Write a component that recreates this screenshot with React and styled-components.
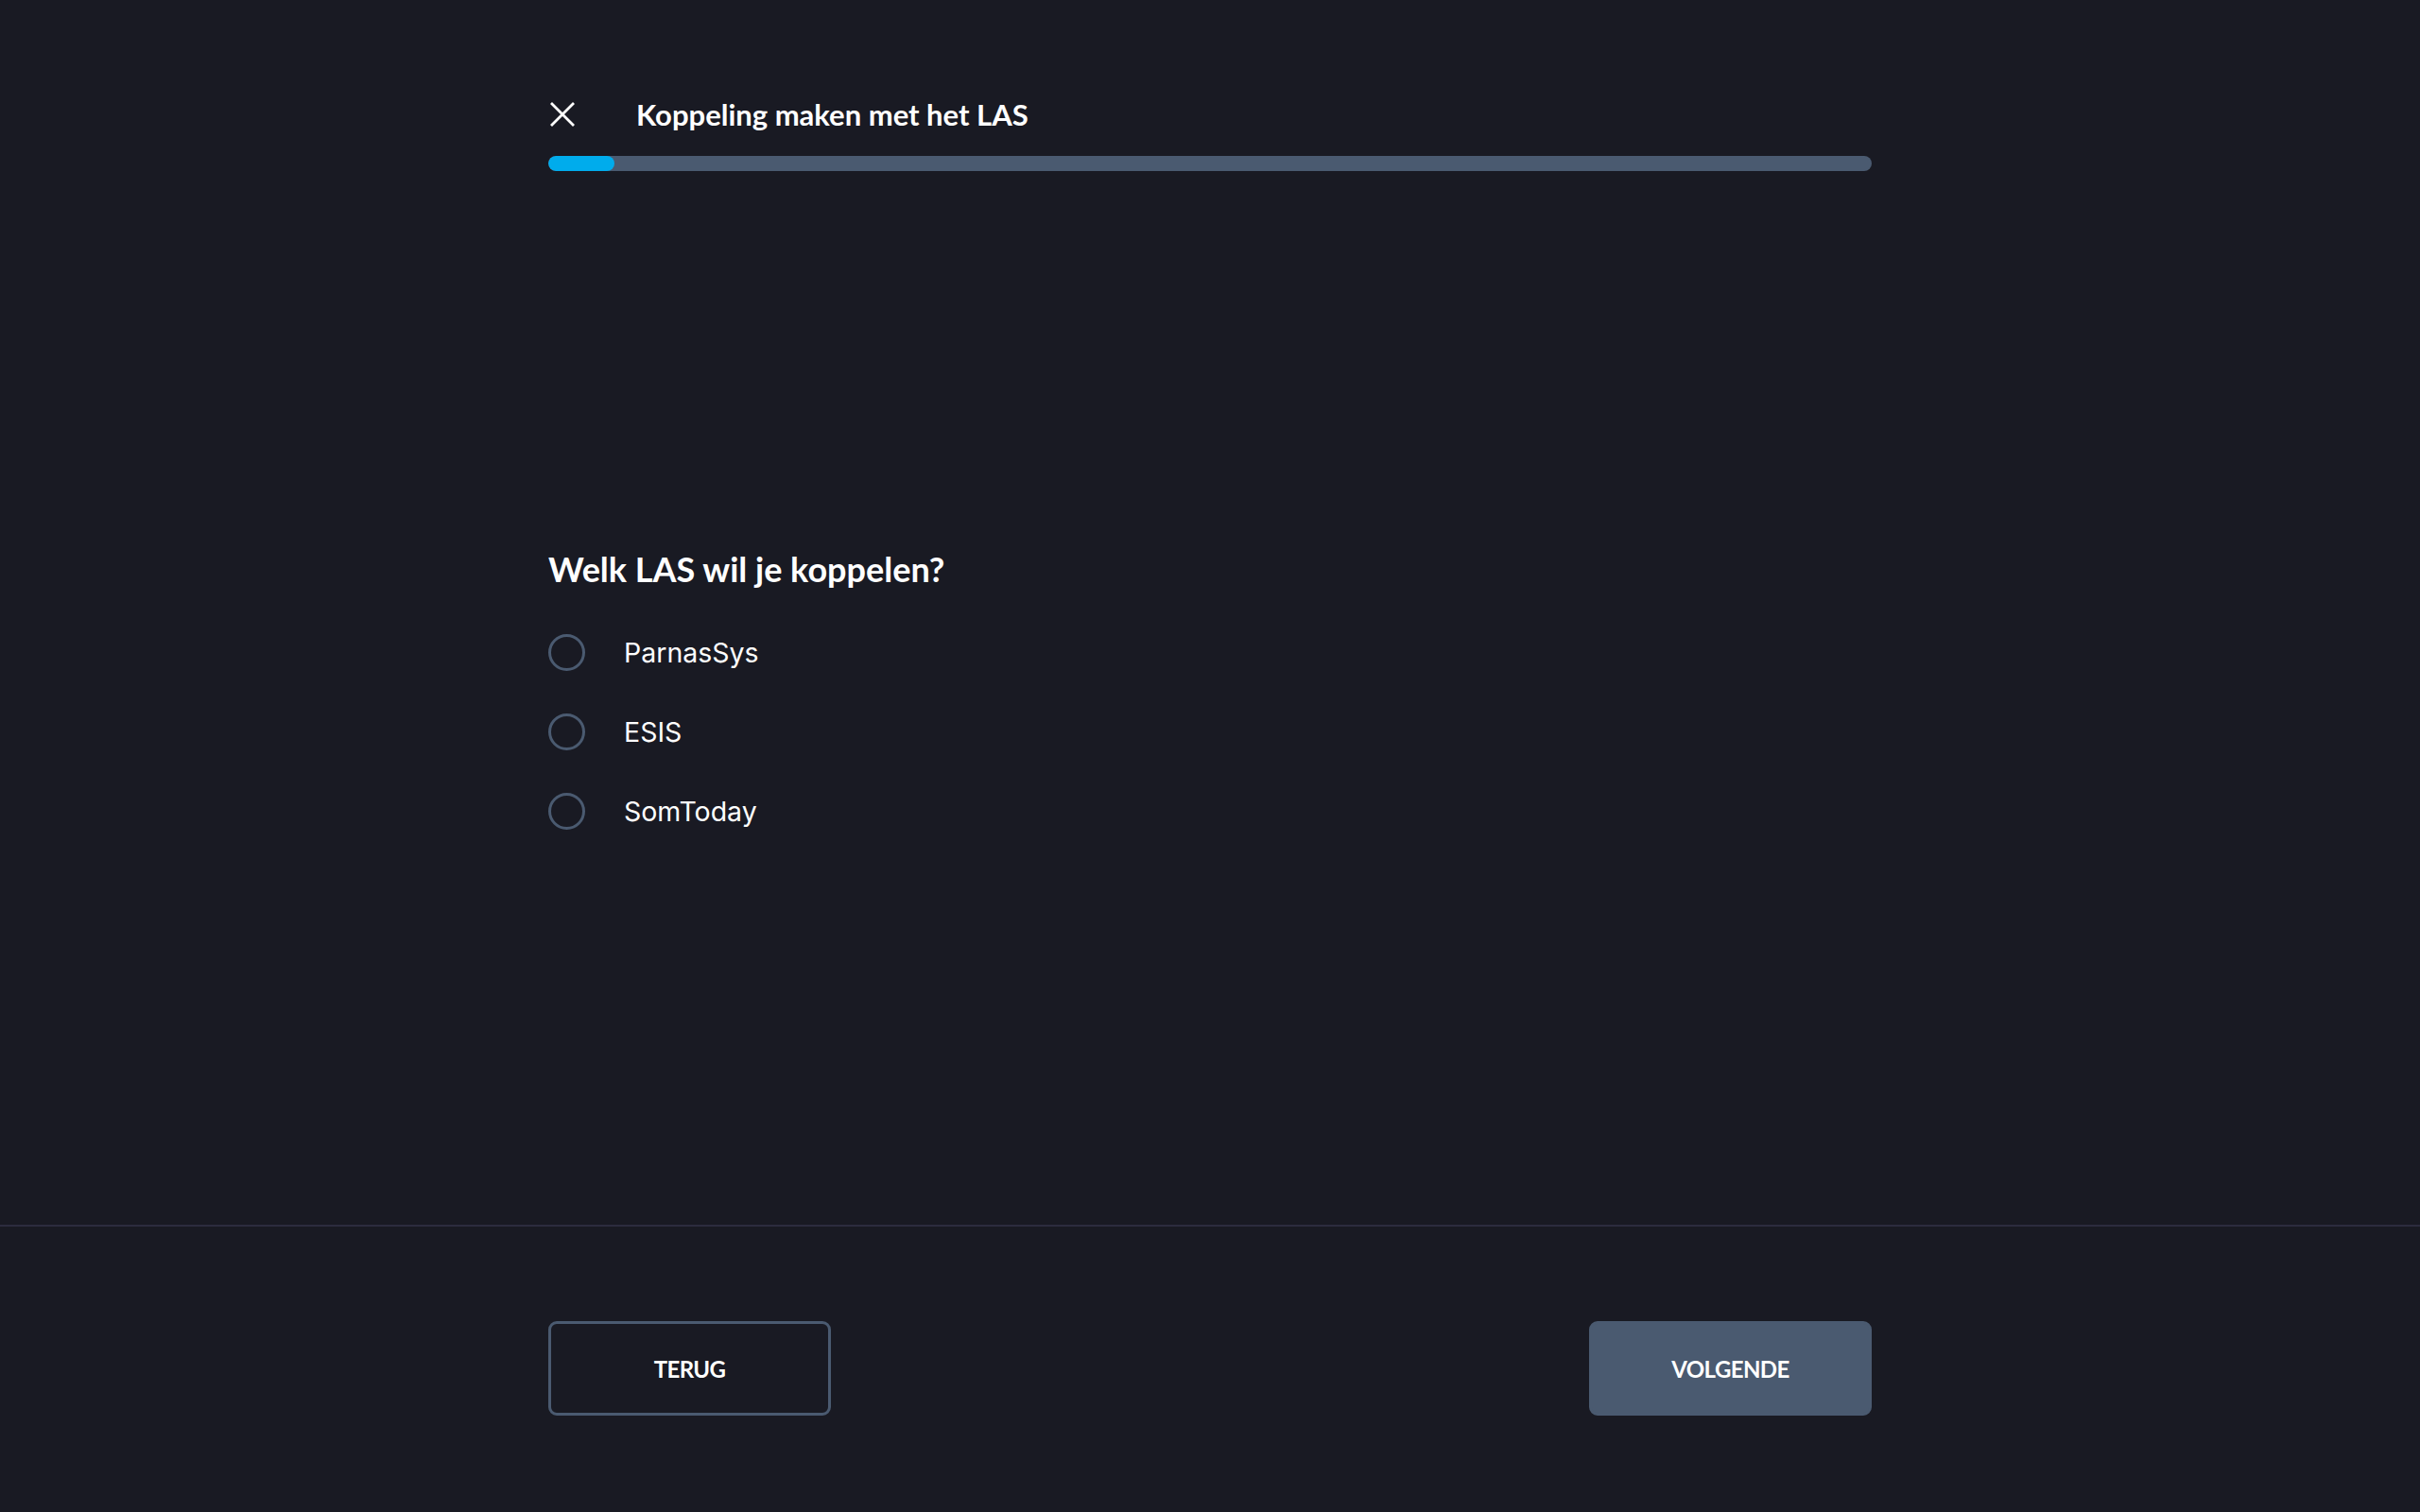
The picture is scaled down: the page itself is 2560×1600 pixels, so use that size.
import React, { useState } from 'react';
import styled, { createGlobalStyle } from 'styled-components';

const color_bg = '#191a23';
const color_muted = '#4a5a70';
const color_primary = '#00acec';
const heading_font = `Lato, "Noto Sans", sans-serif`;

const GlobalStyle = createGlobalStyle`
  html, body {
    margin: 0;
    padding: 0;
    background: ${color_bg};
  }
  body {
    font-family: Inter, "Noto Sans", sans-serif;
    color: #fff;
  }
  * {
    box-sizing: border-box;
  }
`;

const options = ['ParnasSys', 'ESIS', 'SomToday'];

const App = () => {
  const [selected, setSelected] = useState(null);

  return (
    <Page>
      <GlobalStyle />
      <Header>
        <TitleRow>
          <CloseButton aria-label="Sluiten">
            <svg width="28" height="28" viewBox="0 0 28 28">
              <path d="M2 2 L26 26 M26 2 L2 26" stroke="#fff" strokeWidth="2.8" fill="none" />
            </svg>
          </CloseButton>
          <Title>Koppeling maken met het LAS</Title>
        </TitleRow>
        <Progress>
          <ProgressFill style={{ width: `${(70 / 1400) * 100}%` }} />
        </Progress>
      </Header>

      <Main>
        <Question>Welk LAS wil je koppelen?</Question>
        <OptionList>
          {options.map((name) => (
            <Option key={name} onClick={() => setSelected(name)}>
              <Radio checked={selected === name} />
              <OptionLabel>{name}</OptionLabel>
            </Option>
          ))}
        </OptionList>
      </Main>

      <Footer>
        <FooterBar>
          <Button $variant="outline">TERUG</Button>
          <Button $variant="filled">VOLGENDE</Button>
        </FooterBar>
      </Footer>
    </Page>
  );
};
export default App;

const Page = styled.div`
  display: flex;
  flex-direction: column;
  min-height: 100vh;
  background: ${color_bg};
`;

const Container = styled.div`
  width: 1400px;
  margin: 0 auto;
`;

const Header = styled(Container)`
  padding-top: 96px;
`;

const TitleRow = styled.div`
  display: flex;
  align-items: center;
  height: 50px;
`;

const CloseButton = styled.button`
  display: flex;
  align-items: center;
  justify-content: center;
  width: 28px;
  height: 28px;
  padding: 0;
  margin-left: 1px;
  border: none;
  background: none;
  cursor: pointer;
`;

const Title = styled.h1`
  margin: 0 0 0 64px;
  font-family: ${heading_font};
  font-size: 31px;
  font-weight: 700;
  color: #fff;
`;

const Progress = styled.div`
  height: 16px;
  margin-top: 19px;
  border-radius: 8px;
  background: ${color_muted};
  overflow: hidden;
`;

const ProgressFill = styled.div`
  height: 100%;
  border-radius: 8px;
  background: ${color_primary};
`;

const Main = styled(Container)`
  flex: 1;
  display: flex;
  flex-direction: column;
  justify-content: center;
  padding-bottom: 17px;
`;

const Question = styled.h2`
  margin: 0 0 45px;
  font-family: ${heading_font};
  font-size: 36px;
  font-weight: 700;
  color: #fff;
`;

const OptionList = styled.div`
  display: flex;
  flex-direction: column;
  gap: 40px;
`;

const Option = styled.label`
  display: flex;
  align-items: center;
  height: 44px;
  cursor: pointer;
`;

const Radio = styled.span`
  width: 39px;
  height: 39px;
  border-radius: 50%;
  border: 3.5px solid ${({ checked }) => (checked ? color_primary : color_muted)};
  flex-shrink: 0;
`;

const OptionLabel = styled.span`
  margin-left: 41px;
  font-size: 28.5px;
  color: #fff;
`;

const Footer = styled.div`
  border-top: 2px solid #2c2c3e;
  padding: 100px 0 102px;
`;

const FooterBar = styled(Container)`
  display: flex;
  justify-content: space-between;
`;

const Button = styled.button`
  width: 299px;
  height: 100px;
  border-radius: 9px;
  font-family: ${heading_font};
  font-size: 24px;
  font-weight: 700;
  letter-spacing: -0.6px;
  color: #fff;
  cursor: pointer;
  border: 3.5px solid ${color_muted};
  background: ${({ $variant }) => ($variant === 'filled' ? color_muted : 'transparent')};
`;
